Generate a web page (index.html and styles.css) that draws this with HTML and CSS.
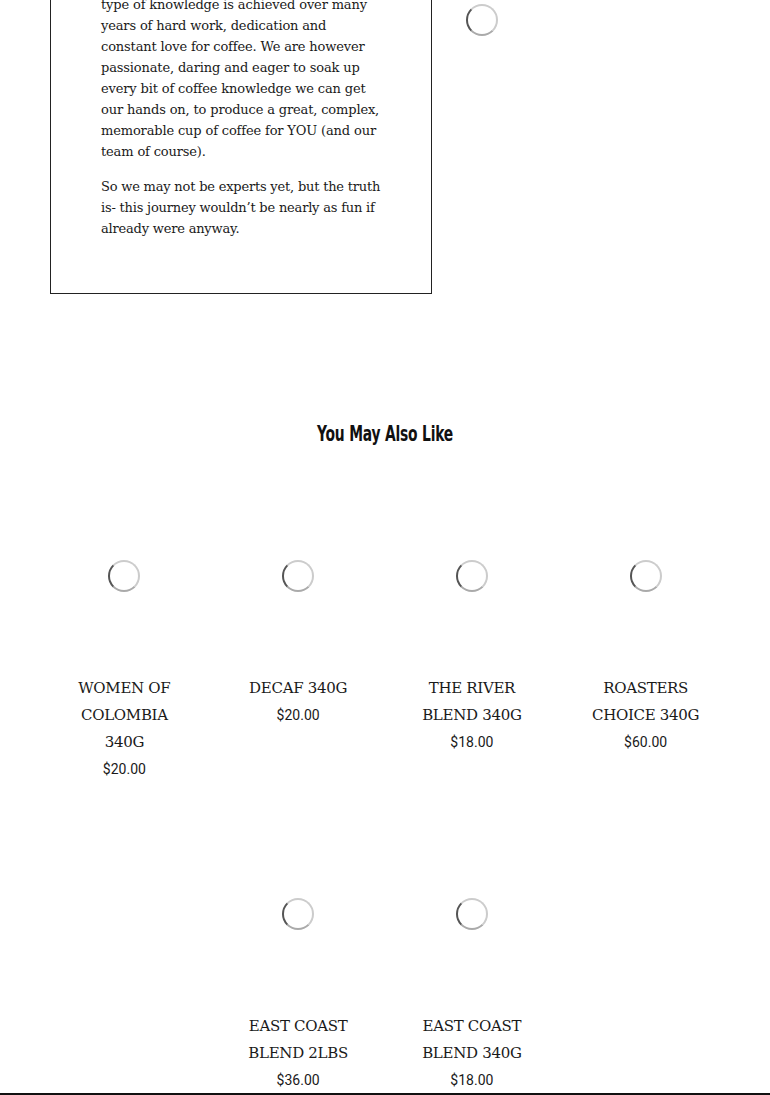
FILE: index.html
```html
<!DOCTYPE html>
<html lang="en">
<head>
    <meta charset="UTF-8">
    <meta name="viewport" content="width=device-width, initial-scale=1.0">
    <title>Our Story</title>
    <link rel="stylesheet" href="styles.css">
</head>
<body>
    <section class="story">
        <div class="story-box">
            <p>type of knowledge is achieved over many years of hard work, dedication and constant love for coffee. We are however passionate, daring and eager to soak up every bit of coffee knowledge we can get our hands on, to produce a great, complex, memorable cup of coffee for YOU (and our team of course).</p>
            <p>So we may not be experts yet, but the truth is- this journey wouldn&rsquo;t be nearly as fun if already were anyway.</p>
        </div>
        <div class="story-media">
            <span class="spinner"></span>
        </div>
    </section>

    <section class="related">
        <h2>You May Also Like</h2>
        <ul class="products">
            <li class="product">
                <div class="product-img"><span class="spinner"></span></div>
                <h3>Women of Colombia 340G</h3>
                <p class="price">$20.00</p>
            </li>
            <li class="product">
                <div class="product-img"><span class="spinner"></span></div>
                <h3>Decaf 340G</h3>
                <p class="price">$20.00</p>
            </li>
            <li class="product">
                <div class="product-img"><span class="spinner"></span></div>
                <h3>The River Blend 340G</h3>
                <p class="price">$18.00</p>
            </li>
            <li class="product">
                <div class="product-img"><span class="spinner"></span></div>
                <h3>Roasters Choice 340G</h3>
                <p class="price">$60.00</p>
            </li>
            <li class="product">
                <div class="product-img"><span class="spinner"></span></div>
                <h3>East Coast Blend 2LBS</h3>
                <p class="price">$36.00</p>
            </li>
            <li class="product">
                <div class="product-img"><span class="spinner"></span></div>
                <h3>East Coast Blend 340G</h3>
                <p class="price">$18.00</p>
            </li>
        </ul>
    </section>

    <footer class="site-footer"></footer>
</body>
</html>
```

FILE: styles.css
```css
body { font-family: "DejaVu Serif", serif; margin: 0; padding: 0; background-color: #fff; color: #1a1a1a; }

.story { display: flex; margin: -6px 0 0 50px; }
.story-box { width: 281px; border: 1px solid #222; border-top: 0; padding: 0 49px 54px 50px; }
.story-box p { font-size: 13px; line-height: 21px; letter-spacing: -0.15px; margin: 0 0 14px; }
.story-box p + p { letter-spacing: -0.2px; margin-bottom: 0; }
.story-media { width: 99px; display: flex; justify-content: center; padding-top: 10px; }

.spinner { display: block; width: 28px; height: 28px; border-radius: 50%; border: 2px solid #ccc; border-left-color: #555; border-bottom-color: #aaa; }

.related { padding: 127px 0 0; }
.related h2 { font-family: "DejaVu Sans", sans-serif; font-weight: bold; font-size: 21px; line-height: 26px; letter-spacing: -0.3px; text-align: center; margin: 0 0 42px; color: #111; transform: scaleX(0.66); }

.products { list-style: none; padding: 0; margin: 0 auto; width: 695px; display: flex; flex-wrap: wrap; justify-content: center; row-gap: 45px; }
.product { width: 173.75px; text-align: center; }
.product-img { height: 173px; display: flex; align-items: center; justify-content: center; margin-bottom: 13px; }
.product h3 { font-weight: normal; font-size: 15px; line-height: 27px; letter-spacing: -0.3px; text-transform: uppercase; margin: 0 auto; width: 130px; }
.product .price { font-family: Roboto, sans-serif; font-size: 14px; line-height: 26px; margin: 0; }

.site-footer { background-color: #111; height: 40px; }
```
